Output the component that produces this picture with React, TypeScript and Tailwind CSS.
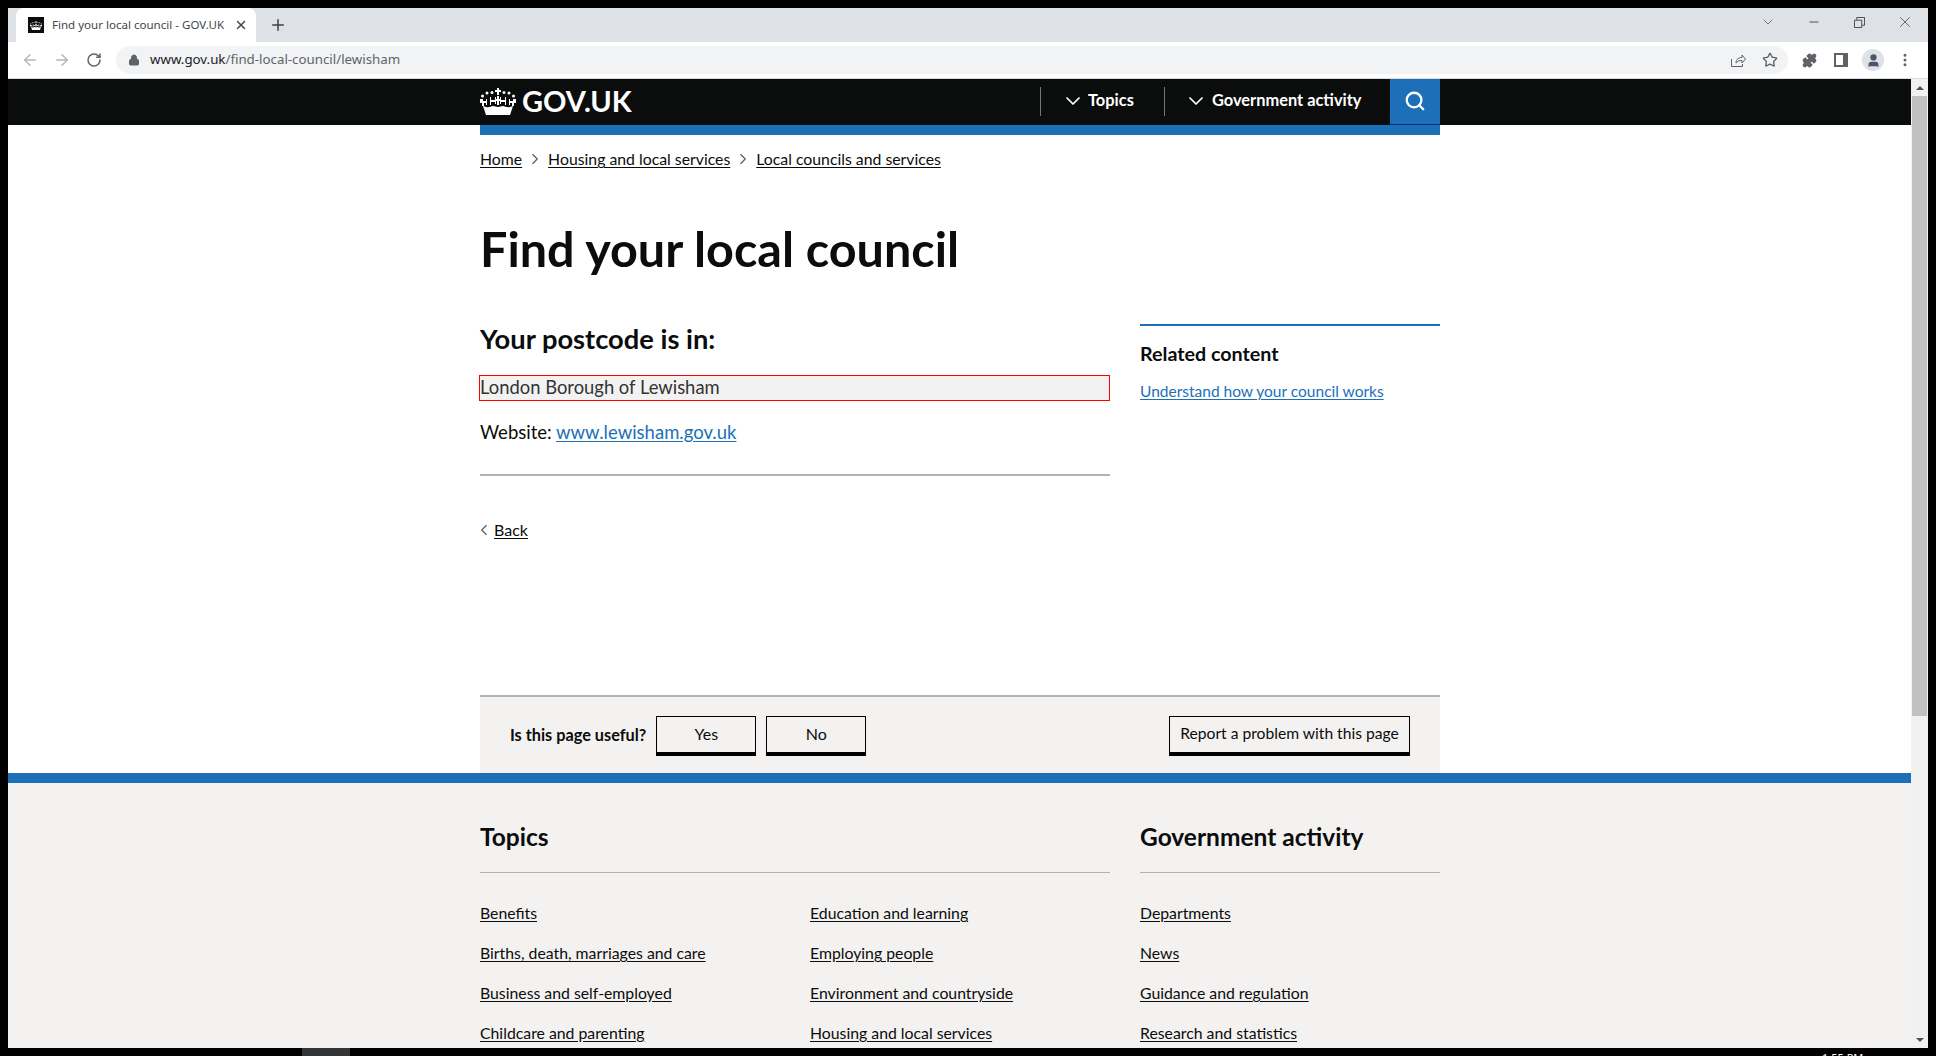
import React from "react";
import { ArrowLeft, ArrowRight, RotateCw, Lock, Plus, X, ChevronDown, Minus, Star, Puzzle, Search, EllipsisVertical, ChevronRight, ChevronLeft, User } from "lucide-react";

const Crown = ({ className }: { className?: string }) => (
  <svg viewBox="0 0 36 27" className={className} fill="currentColor">
    <path d="M17 0h2v2h2v2h-2v3h-2V4h-2V2h2z" />
    <circle cx="12" cy="4.500" r="1.500" />
    <circle cx="24" cy="4.500" r="1.500" />
    <circle cx="7" cy="5" r="1.500" />
    <circle cx="29" cy="5" r="1.500" />
    <circle cx="2.500" cy="8" r="1.500" />
    <circle cx="33.500" cy="8" r="1.500" />
    <path d="M0 11h3v2h3v-2h1v6H6v-2H4v3H2v-3H0zM29 11h1v2h3v-2h3v4h-2v3h-2v-3h-2v2h-1z" />
    <path d="M10 9h1v3h4V9h1v7h-1v-2h-4v3h-1zM20 9h1v3h4V9h1v8h-1v-3h-4v2h-1z" />
    <path d="M17 8h2v3h2v2h-2v4h-2v-4h-2v-2h2z" />
    <path d="M3 18l3 1c3 1 5-1 7-1s3 1 5 1 3-1 5-1 4 2 7 1l3-1-3 9H6z" />
  </svg>
);

const FooterLink = ({ children }: { children: string }) => (
  <a className="underline underline-offset-[2px] text-[#0b0c0c] text-[15.800px] leading-5 h-5 block whitespace-nowrap">{children}</a>
);

export default function App() {
  return (
    <div className="h-[1056px] w-[1936px] bg-black overflow-hidden relative font-['Lato',sans-serif]">
      <div className="absolute left-[302px] top-[1048px] w-[48px] h-[8px] bg-[#333436]" />
      <div className="absolute left-[1822px] top-[1052px] text-white text-[11px] leading-3 font-['Noto_Sans',sans-serif]">1:55 PM</div>
      <div className="mx-2 mt-2 h-[1040px] flex flex-col bg-white overflow-hidden">
        {/* tab strip */}
        <div className="h-[34px] bg-[#dee1e6] flex items-end shrink-0 pl-2 font-['Noto_Sans',sans-serif]">
          <div className="w-[240px] h-[34px] bg-white rounded-t-lg flex items-center pl-3 pr-[8px]">
            <div className="w-4 h-4 bg-[#0b0c0c] flex items-center justify-center text-white shrink-0">
              <Crown className="w-3 h-[9px]" />
            </div>
            <span className="ml-[8px] text-[11.550px] text-[#45474a] whitespace-nowrap flex-1">Find your local council - GOV.UK</span>
            <X className="w-[14px] h-[14px] text-[#45474a]" strokeWidth={2.500} />
          </div>
          <div className="h-[34px] flex items-center ml-[13px]">
            <Plus className="w-[18px] h-[18px] text-[#3c4043]" strokeWidth={2} />
          </div>
          <div className="flex-1" />
          <div className="h-[34px] flex items-center text-[#3c4043] pb-[6px]">
            <ChevronDown className="w-[16px] h-[16px] mr-[31px]" strokeWidth={1} />
            <Minus className="w-[14px] h-[14px] mr-[33px]" strokeWidth={1.500} />
            <svg viewBox="0 0 12 12" className="w-[11px] h-[11px] mr-[31px]" fill="none" stroke="currentColor"><path d="M.5 3.500h8v8h-8zM3 3V.5h8.500V9H9" /></svg>
            <X className="w-[18px] h-[18px] mr-[14px]" strokeWidth={1} />
          </div>
        </div>
        {/* toolbar */}
        <div className="h-[37px] bg-white border-b border-[#dadce0] flex items-center shrink-0 pl-[13px] font-['Noto_Sans',sans-serif]">
          <ArrowLeft className="w-[18px] h-[18px] text-[#b5b7ba]" strokeWidth={2} />
          <ArrowRight className="w-[18px] h-[18px] text-[#b5b7ba] ml-[14px]" strokeWidth={2} />
          <RotateCw className="w-[16px] h-[16px] text-[#5f6368] ml-[15px]" strokeWidth={2.250} />
          <div className="ml-[14px] w-[1672px] h-[28px] rounded-full bg-[#f1f3f4] flex items-center pl-[12px]">
            <Lock className="w-[12px] h-[12px] text-[#5f6368] fill-[#5f6368]" />
            <span className="ml-[10px] text-[13.300px] text-[#5f6368]"><span className="text-[#202124]">www.gov.uk</span>/find-local-council/lewisham</span>
            <div className="flex-1" />
            <svg viewBox="0 0 16 16" className="w-4 h-4 text-[#5f6368] mr-[16px]" fill="none" stroke="currentColor"><path d="M1.500 7v7.500h11V12M6 11c0-4 3-5.500 6-5.500V3l3.500 4-3.500 4V8.500C9.500 8.500 7.500 9 6 11z" /></svg>
            <Star className="w-4 h-4 text-[#5f6368] mr-[10px]" strokeWidth={2} />
          </div>
          <Puzzle className="w-[15px] h-[15px] ml-[14px] text-[#5f6368] fill-[#5f6368]" />
          <div className="w-[14px] h-[14px] ml-[17px] border-[2px] border-r-[5px] border-[#5f6368]" />
          <div className="w-[22px] h-[22px] ml-[14px] rounded-full bg-[#dee1e6] flex items-center justify-center">
            <User className="w-[15px] h-[15px] text-[#4a5568] fill-[#4a5568]" />
          </div>
          <EllipsisVertical className="w-4 h-4 ml-[13px] text-[#5f6368]" strokeWidth={2.500} />
        </div>

        <div className="flex-1 flex min-h-0">
          {/* page */}
          <div className="flex-1 min-w-0 overflow-hidden">
            <div className="bg-[#0b0c0c] h-[46px]">
              <div className="w-[960px] ml-[472px] h-[46px] flex items-center text-white">
                <Crown className="w-[36px] h-[27px] mb-[2px]" />
                <span className="ml-[6px] text-[29px] font-bold leading-none mb-[4px]">GOV.UK</span>
                <div className="flex-1" />
                <div className="h-[29px] border-l border-[#777] flex items-center pl-[20px] w-[124px] mb-[2px]">
                  <ChevronDown className="w-6 h-6" strokeWidth={1.750} />
                  <span className="ml-[3px] text-[16.400px] font-bold mb-[1px]">Topics</span>
                </div>
                <div className="h-[29px] border-l border-[#777] flex items-center pl-[19px] w-[226px] mb-[2px]">
                  <ChevronDown className="w-6 h-6" strokeWidth={1.750} />
                  <span className="ml-[4px] text-[16.400px] font-bold whitespace-nowrap mb-[1px]">Government activity</span>
                </div>
                <div className="w-[50px] h-[46px] bg-[#1d70b8] border-b border-[#003078] flex items-center justify-center pb-[2px]">
                  <Search className="w-[22px] h-[22px]" strokeWidth={2.500} />
                </div>
              </div>
            </div>
            <div className="w-[960px] ml-[472px]">
              <div className="h-[10px] bg-[#1d70b8]" />
              <div className="mt-[14px] flex items-center text-[15.800px] text-[#0b0c0c] h-5">
                <a className="underline underline-offset-2">Home</a>
                <ChevronRight className="w-[18px] h-[18px] mx-[4px] text-[#505a5f]" strokeWidth={1.500} />
                <a className="underline underline-offset-2">Housing and local services</a>
                <ChevronRight className="w-[18px] h-[18px] mx-[4px] text-[#505a5f]" strokeWidth={1.500} />
                <a className="underline underline-offset-2">Local councils and services</a>
              </div>
              <h1 className="mt-[52px] text-[48.500px] font-bold leading-[54px] text-[#0b0c0c]">Find your local council</h1>
              <div className="mt-[49px] flex gap-[30px]">
                <div className="w-[630px]">
                  <h2 className="text-[27.300px] font-bold leading-[30px] text-[#0b0c0c]">Your postcode is in:</h2>
                  <div className="mt-[21px] h-[26px] border border-[#f00] bg-[#f2f2f2] text-[#333] text-[18.400px] leading-[22px] w-[631px] -ml-[1px]">London Borough of Lewisham</div>
                  <p className="mt-[19px] text-[18.500px] leading-[25px] text-[#0b0c0c]">Website: <a className="text-[#1d70b8] underline underline-offset-2">www.lewisham.gov.uk</a></p>
                  <div className="mt-[29px] border-t-2 border-[#b1b4b6]" />
                  <div className="mt-[44px] flex items-center text-[16px] text-[#0b0c0c] h-5">
                    <ChevronLeft className="w-[18px] h-[18px] -ml-[5px] text-[#505a5f]" strokeWidth={1.500} />
                    <a className="ml-[1px] underline underline-offset-2">Back</a>
                  </div>
                </div>
                <div className="w-[300px]">
                  <div className="h-[2px] bg-[#1d70b8]" />
                  <h3 className="mt-[16px] text-[19.700px] font-bold leading-6 text-[#0b0c0c]">Related content</h3>
                  <a className="mt-[15px] block text-[15.500px] leading-5 text-[#1d70b8] underline underline-offset-2">Understand how your council works</a>
                </div>
              </div>
              <div className="mt-[155px] h-[78px] bg-[#f3f2f1] border-t-2 border-[#b1b4b6] flex items-center px-[30px] pt-[1px] text-[#0b0c0c]">
                <span className="text-[16.300px] font-bold">Is this page useful?</span>
                <button className="ml-[10px] w-[100px] h-[40px] border border-black border-b-[4px] text-[16px]">Yes</button>
                <button className="ml-[10px] w-[100px] h-[40px] border border-black border-b-[4px] text-[16px]">No</button>
                <div className="flex-1" />
                <button className="w-[241px] h-[40px] border border-black border-b-[4px] text-[15.650px]">Report a problem with this page</button>
              </div>
            </div>
            <div className="h-[10px] bg-[#1d70b8]" />
            <div className="bg-[#f3f2f1] h-[400px]">
              <div className="w-[960px] ml-[472px] pt-[39px] flex gap-[30px]">
                <div className="w-[630px]">
                  <h2 className="text-[24.500px] font-bold leading-[30px] text-[#0b0c0c]">Topics</h2>
                  <div className="mt-[20px] border-t border-[#b1b4b6]" />
                  <div className="mt-[30px] grid grid-cols-2 gap-y-5 gap-x-[30px]">
                    <FooterLink>Benefits</FooterLink>
                    <FooterLink>Education and learning</FooterLink>
                    <FooterLink>Births, death, marriages and care</FooterLink>
                    <FooterLink>Employing people</FooterLink>
                    <FooterLink>Business and self-employed</FooterLink>
                    <FooterLink>Environment and countryside</FooterLink>
                    <FooterLink>Childcare and parenting</FooterLink>
                    <FooterLink>Housing and local services</FooterLink>
                  </div>
                </div>
                <div className="w-[300px]">
                  <h2 className="text-[24.500px] font-bold leading-[30px] text-[#0b0c0c]">Government activity</h2>
                  <div className="mt-[20px] border-t border-[#b1b4b6]" />
                  <div className="mt-[30px] flex flex-col gap-5">
                    <FooterLink>Departments</FooterLink>
                    <FooterLink>News</FooterLink>
                    <FooterLink>Guidance and regulation</FooterLink>
                    <FooterLink>Research and statistics</FooterLink>
                  </div>
                </div>
              </div>
            </div>
          </div>
          {/* scrollbar */}
          <div className="w-[17px] bg-[#f1f1f1] shrink-0 flex flex-col items-center">
            <div className="h-[17px] flex items-center justify-center">
              <div className="w-0 h-0 border-x-[4px] border-x-transparent border-b-[4px] border-b-[#505050]" />
            </div>
            <div className="w-[15px] h-[620px] bg-[#c1c1c1]" />
            <div className="flex-1" />
            <div className="h-[17px] flex items-center justify-center">
              <div className="w-0 h-0 border-x-[4px] border-x-transparent border-t-[4px] border-t-[#505050]" />
            </div>
          </div>
        </div>
      </div>
    </div>
  );
}
